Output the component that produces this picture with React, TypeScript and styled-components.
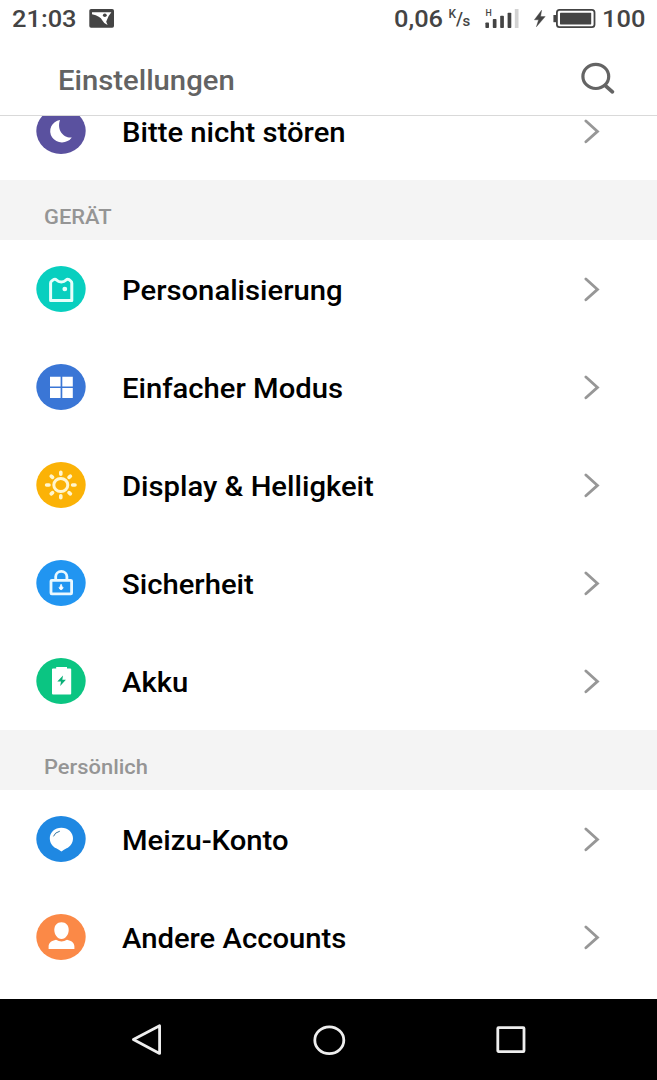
import React from 'react';
import styled, { createGlobalStyle } from 'styled-components';

const GlobalStyle = createGlobalStyle`
  * { box-sizing: border-box; }
  body { margin: 0; background: #fff; font-family: Roboto, sans-serif; }
  svg { display: block; flex: none; }
`;

const Screen = styled.div`
  display: flex;
  flex-direction: column;
  height: 1080px;
  overflow: hidden;
  background: #fff;
`;

const Wide = styled.span<{ $scale?: number }>`
  display: inline-block;
  white-space: nowrap;
  transform: scaleX(${p => p.$scale ?? 1.083});
  transform-origin: left center;
`;

const StatusBar = styled.div`
  display: flex;
  align-items: center;
  height: 38px;
  flex: none;
  padding-left: 12px;
  color: #444;
  font-size: 24px;
  font-weight: 500;
  line-height: 38px;
`;

const Cell = styled.div<{ $width: number }>`
  width: ${p => p.$width}px;
  height: 38px;
  flex: none;
`;

const StatusSpacer = styled.div`
  width: 280px;
  flex: none;
`;

const Unit = styled.div`
  display: flex;
  width: 36px;
  height: 38px;
  flex: none;
  line-height: 14px;
`;

const UnitPart = styled.span<{ $top: number; $width: number; $size: number }>`
  width: ${p => p.$width}px;
  padding-top: ${p => p.$top}px;
  font-size: ${p => p.$size}px;
`;

const Header = styled.header`
  display: flex;
  align-items: center;
  justify-content: space-between;
  height: 78px;
  flex: none;
  padding: 8px 41px 0 58px;
  border-bottom: 1px solid #d9d9d9;
`;

const Title = styled.h1`
  margin: 0;
  color: #636363;
  font-size: 27px;
  font-weight: 500;
  line-height: 32px;
`;

const Content = styled.main`
  display: flex;
  flex-direction: column;
  justify-content: flex-end;
  height: 883px;
  flex: none;
  padding-bottom: 13px;
  overflow: hidden;
`;

const Row = styled.div`
  display: flex;
  align-items: center;
  height: 98px;
  flex: none;
  padding: 0 56px 0 36px;
`;

const Label = styled.div`
  flex: 1;
  margin-left: 36px;
  padding-top: 3px;
  color: #000;
  font-size: 27px;
  font-weight: 500;
  line-height: 32px;
`;

const Section = styled.div`
  display: flex;
  align-items: center;
  height: 60px;
  flex: none;
  padding: 13px 0 0 43.5px;
  background: #f4f4f4;
  color: #959595;
  font-size: 20px;
  font-weight: 500;
`;

const NavBar = styled.nav`
  display: flex;
  align-items: center;
  justify-content: space-between;
  height: 81px;
  flex: none;
  padding: 0 127px;
  background: #000;
`;

function Badge({ color, children }: { color: string; children: React.ReactNode }) {
  return (
    <svg width="50" height="46" viewBox="0 0 50 46" fill="none">
      <ellipse cx="25" cy="23" rx="24.7" ry="22.9" fill={color} />
      {children}
    </svg>
  );
}

const MoonIcon = () => (
  <Badge color="#5a519f">
    <path d="M24 12A11.8 11.3 0 1 0 35.8 29.4C28 30.4 20.4 22.5 24 12Z" fill="#fff" />
  </Badge>
);

const ThemeIcon = () => (
  <Badge color="#08cfbf">
    <path d="M14.6 34.4V17.2Q14.6 15.8 15.8 14.9L17.6 13.6Q19.2 12.6 20.5 14Q22.4 16 25.3 16T30.1 14Q31.4 12.6 33 13.6L34.6 14.9Q35.8 15.8 35.8 17.2V34.4Z" stroke="#e6fffb" strokeWidth="3" strokeLinejoin="round" />
    <ellipse cx="28.8" cy="23" rx="2.4" ry="2.2" fill="#e6fffb" />
  </Badge>
);

const GridIcon = () => (
  <Badge color="#3a76d6">
    <path d="M14 12.7H24.6V22.4H14ZM26.3 12.7H36.8V22.4H26.3ZM14 24.1H24.6V34H14ZM26.3 24.1H36.8V34H26.3Z" fill="#fff" />
  </Badge>
);

const SunIcon = () => (
  <Badge color="#fbb206">
    <ellipse cx="24.8" cy="23" rx="7" ry="6.6" stroke="#fff6cf" strokeWidth="3" />
    <path
      d="M24.8 10.2V12.2M24.8 33.8V35.8M10.6 23H13M36.6 23H39M15.2 14.1L16.6 15.4M33 30.6L34.4 31.9M34.4 14.1L33 15.4M16.6 30.6L15.2 31.9"
      stroke="#fff6cf"
      strokeWidth="3.6"
      strokeLinecap="round"
    />
  </Badge>
);

const LockIcon = () => (
  <Badge color="#2195f1">
    <rect x="15" y="20.3" width="20.6" height="13.6" rx="0.8" stroke="#e9f8ff" strokeWidth="2.8" />
    <path d="M19.7 20V16.6A5.6 5.2 0 0 1 30.9 16.6V20" stroke="#e9f8ff" strokeWidth="2.8" />
    <path d="M25.1 24.2L26 26.4A1.8 1.7 0 1 1 24.2 26.4Z" fill="#fff" stroke="#fff" strokeWidth="0.8" />
  </Badge>
);

const BatteryIcon = () => (
  <Badge color="#0bc582">
    <path d="M16 11.2Q16 10.4 17 10.4H20.2V8.9H31V10.4H34.2Q35.2 10.4 35.2 11.2V35.6Q35.2 36.6 34.2 36.6H17Q16 36.6 16 35.6Z" fill="#fff" />
    <path d="M27 17.6L21.3 23.6H25L24.2 28L29.9 21.8H26.3Z" fill="#0bb078" />
  </Badge>
);

const MeizuIcon = () => (
  <Badge color="#1f88e2">
    <path d="M25.4 11.7C32 11.7 37 16.4 37 22.2C37 27.4 34 30.6 30.6 32.3Q28 33.6 25.4 35.4Q22.8 33.6 20.2 32.3C16.8 30.6 13.8 27.4 13.8 22.2C13.8 16.4 18.8 11.7 25.4 11.7Z" fill="#fff" />
    <path d="M17.6 20Q18.8 16.4 23.4 15.3" stroke="#36759f" strokeWidth="1" strokeLinecap="round" />
  </Badge>
);

const PersonIcon = () => (
  <Badge color="#fb8947">
    <path d="M25.5 8.3C30 8.3 32.7 11.5 32.7 15.8C32.7 20.5 29.8 25 25.5 25S18.3 20.5 18.3 15.8C18.3 11.5 21 8.3 25.5 8.3Z" fill="#fff" />
    <path d="M12.6 35V32.6C12.6 28.6 15.6 26.9 20 25.8Q25.5 29 31 25.8C35.4 26.9 38.4 28.6 38.4 32.6V35Z" fill="#fff" />
  </Badge>
);

const Chevron = () => (
  <svg width="17" height="28" viewBox="0 0 17 28" fill="none">
    <path d="M1.9 4L13.5 14.4L1.9 24.8" stroke="#979797" strokeWidth="2.8" strokeLinecap="round" />
  </svg>
);

const SearchIcon = () => (
  <svg width="36" height="38" viewBox="0 0 36 38" fill="none">
    <ellipse cx="15.8" cy="14.4" rx="12.9" ry="12.1" stroke="#646464" strokeWidth="3.2" />
    <path d="M25.6 23.8L32.4 29.8" stroke="#646464" strokeWidth="3.8" strokeLinecap="round" />
  </svg>
);

const PictureIcon = () => (
  <svg width="25" height="38" viewBox="0 0 25 38" fill="none">
    <rect x="0.3" y="9" width="24.7" height="18.8" rx="1.8" fill="#444" />
    <path d="M3 12.2H22.4Q18.6 16.6 17.8 20.2L17.2 21.8L18.6 25Q14.4 23 13.2 20.2Q11.4 16 3 14.2Z" fill="#fff" />
    <ellipse cx="15.8" cy="15.3" rx="1.9" ry="1.7" fill="#444" />
  </svg>
);

const SignalIcon = () => (
  <svg width="34" height="38" viewBox="0 0 34 38">
    <text x="0.4" y="15.8" fontFamily="Roboto, sans-serif" fontSize="8.8" fontWeight="500" fill="#444">H</text>
    <rect x="0.4" y="22.4" width="3.6" height="5.6" rx="0.8" fill="#444" />
    <rect x="7.8" y="19" width="3.7" height="9" rx="0.8" fill="#444" />
    <rect x="15.2" y="15.8" width="3.7" height="12.2" rx="0.8" fill="#444" />
    <rect x="22.6" y="12.8" width="3.7" height="15.2" rx="0.8" fill="#444" />
    <rect x="29.8" y="9" width="3.7" height="19" fill="#d2d2d2" />
  </svg>
);

const PowerIcon = () => (
  <svg width="62" height="38" viewBox="0 0 62 38" fill="none">
    <path d="M7.6 10.2L0.4 19.8H4.6L2.4 26.8L11.2 16.6H6.6Z" fill="#444" stroke="#444" strokeWidth="0.4" />
    <path d="M22.2 15H19.4V22.2H22.2" fill="#444" />
    <rect x="22.9" y="9.9" width="37.6" height="17.2" rx="2.6" stroke="#444" strokeWidth="1.8" />
    <rect x="26" y="12.8" width="31.2" height="11.6" rx="0.6" fill="#444" />
  </svg>
);

const deviceItems = [
  { label: 'Personalisierung', icon: <ThemeIcon /> },
  { label: 'Einfacher Modus', icon: <GridIcon /> },
  { label: 'Display & Helligkeit', icon: <SunIcon /> },
  { label: 'Sicherheit', icon: <LockIcon /> },
  { label: 'Akku', icon: <BatteryIcon /> },
];

const personalItems = [
  { label: 'Meizu-Konto', icon: <MeizuIcon /> },
  { label: 'Andere Accounts', icon: <PersonIcon /> },
];

function SettingRow({ label, icon }: { label: string; icon: React.ReactNode }) {
  return (
    <Row>
      {icon}
      <Label><Wide>{label}</Wide></Label>
      <Chevron />
    </Row>
  );
}

export default function App() {
  return (
    <Screen>
      <GlobalStyle />
      <StatusBar>
        <Cell $width={77}><Wide $scale={1.06}>21:03</Wide></Cell>
        <PictureIcon />
        <StatusSpacer />
        <Cell $width={54.5}><Wide $scale={1.06}>0,06</Wide></Cell>
        <Unit>
          <UnitPart $top={7} $width={7.5} $size={12}>K</UnitPart>
          <UnitPart $top={12} $width={6.5} $size={18}>/</UnitPart>
          <UnitPart $top={14} $width={9} $size={15}>s</UnitPart>
        </Unit>
        <SignalIcon />
        <Cell $width={15} />
        <PowerIcon />
        <Cell $width={6} />
        <Wide $scale={1.06}>100</Wide>
      </StatusBar>
      <Header>
        <Title><Wide>Einstellungen</Wide></Title>
        <SearchIcon />
      </Header>
      <Content>
        <SettingRow label="Bitte nicht stören" icon={<MoonIcon />} />
        <Section><Wide $scale={1.095}>GERÄT</Wide></Section>
        {deviceItems.map(item => <SettingRow key={item.label} {...item} />)}
        <Section><Wide $scale={1.095}>Persönlich</Wide></Section>
        {personalItems.map(item => <SettingRow key={item.label} {...item} />)}
      </Content>
      <NavBar>
        <svg width="40" height="40" viewBox="0 0 40 40" fill="none">
          <path d="M6.4 19.6L32.6 5.8V33.4Z" stroke="#eee" strokeWidth="2.8" strokeLinejoin="round" />
        </svg>
        <svg width="40" height="40" viewBox="0 0 40 40" fill="none">
          <ellipse cx="20.3" cy="20.2" rx="14.5" ry="13.4" stroke="#eee" strokeWidth="2.8" />
        </svg>
        <svg width="40" height="40" viewBox="0 0 40 40" fill="none">
          <rect x="7.8" y="7.6" width="26.2" height="24" rx="0.8" stroke="#eee" strokeWidth="2.8" />
        </svg>
      </NavBar>
    </Screen>
  );
}
